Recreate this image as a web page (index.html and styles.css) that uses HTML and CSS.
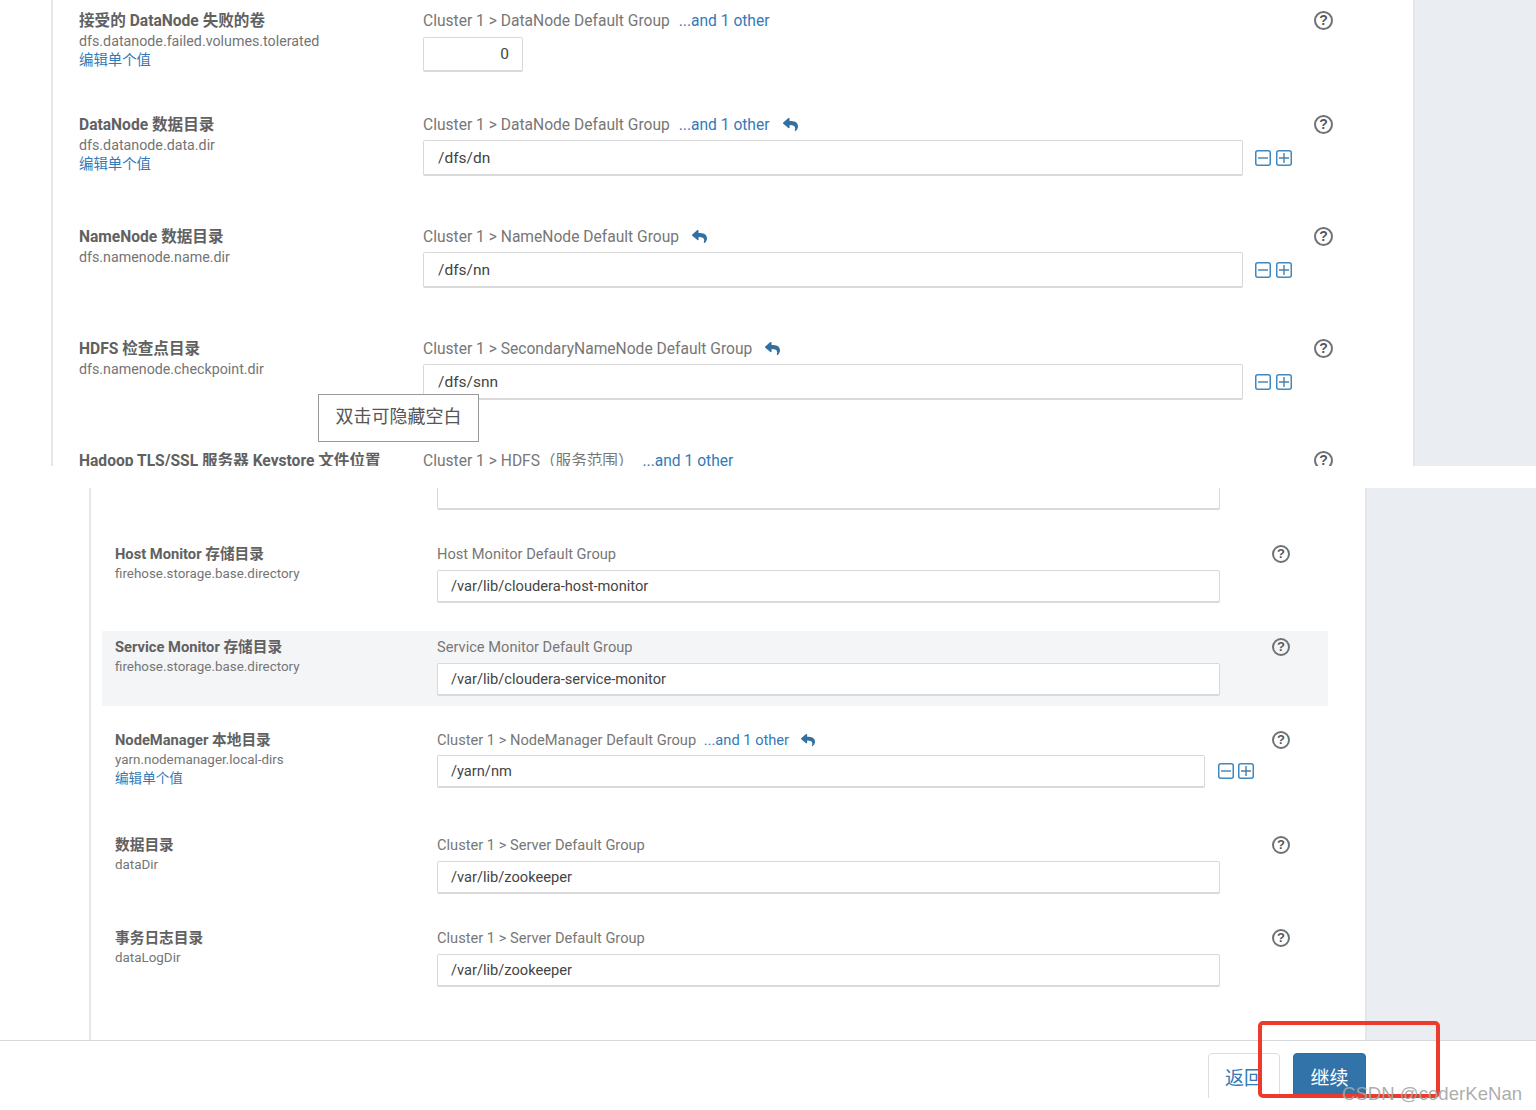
FILE: index.html
```html
<!DOCTYPE html>
<html lang="zh-CN">
<head>
    <meta charset="UTF-8">
    <meta name="viewport" content="width=device-width, initial-scale=1.0">
    <title>HDFS 配置</title>
    <link rel="stylesheet" href="styles.css">
</head>
<body>
    <svg class="defs" width="0" height="0">
        <symbol id="undo" viewBox="0 0 512 512">
            <path fill="#33709f" d="M8.309 189.836L184.313 37.851C199.719 24.546 224 35.347 224 56.015v80.053c160.629 1.839 288 34.032 288 186.258 0 61.441-39.581 122.309-83.333 154.132-13.653 9.931-33.111-2.533-28.077-18.631 45.344-145.012-21.507-183.51-176.59-185.742V360c0 20.7-24.3 31.453-39.687 18.164l-176.004-152c-11.071-9.562-11.086-26.753 0-36.328z"/>
        </symbol>
        <symbol id="minus" viewBox="0 0 16 16">
            <rect x="0.75" y="0.75" width="14.5" height="14.5" rx="2" fill="none" stroke="#3f88c0" stroke-width="1.5"/>
            <path d="M3 8h10" stroke="#4a7ea8" stroke-width="1.4"/>
        </symbol>
        <symbol id="plus" viewBox="0 0 16 16">
            <rect x="0.75" y="0.75" width="14.5" height="14.5" rx="2" fill="none" stroke="#3f88c0" stroke-width="1.5"/>
            <path d="M3 8h10M8 3v10" stroke="#4a7ea8" stroke-width="1.4"/>
        </symbol>
    </svg>

    <!-- 上半部分 -->
    <section class="shot shot-top">
        <div class="panel">
            <div class="row row-first">
                <div class="label">
                    <div class="name">接受的 DataNode 失败的卷</div>
                    <div class="key">dfs.datanode.failed.volumes.tolerated</div>
                    <a class="edit">编辑单个值</a>
                </div>
                <div class="value">
                    <div class="source">Cluster 1 &gt; DataNode Default Group <a class="more">...and 1 other</a></div>
                    <div class="input input-num">0</div>
                </div>
                <div class="tools"></div>
                <span class="help">?</span>
            </div>
            <div class="row">
                <div class="label">
                    <div class="name">DataNode 数据目录</div>
                    <div class="key">dfs.datanode.data.dir</div>
                    <a class="edit">编辑单个值</a>
                </div>
                <div class="value">
                    <div class="source">Cluster 1 &gt; DataNode Default Group <a class="more">...and 1 other</a><svg class="undo"><use href="#undo"/></svg></div>
                    <div class="input">/dfs/dn</div>
                </div>
                <div class="tools"><svg class="tool"><use href="#minus"/></svg><svg class="tool"><use href="#plus"/></svg></div>
                <span class="help">?</span>
            </div>
            <div class="row">
                <div class="label">
                    <div class="name">NameNode 数据目录</div>
                    <div class="key">dfs.namenode.name.dir</div>
                </div>
                <div class="value">
                    <div class="source">Cluster 1 &gt; NameNode Default Group<svg class="undo"><use href="#undo"/></svg></div>
                    <div class="input">/dfs/nn</div>
                </div>
                <div class="tools"><svg class="tool"><use href="#minus"/></svg><svg class="tool"><use href="#plus"/></svg></div>
                <span class="help">?</span>
            </div>
            <div class="row">
                <div class="label">
                    <div class="name">HDFS 检查点目录</div>
                    <div class="key">dfs.namenode.checkpoint.dir</div>
                </div>
                <div class="value">
                    <div class="source">Cluster 1 &gt; SecondaryNameNode Default Group<svg class="undo"><use href="#undo"/></svg></div>
                    <div class="input">/dfs/snn</div>
                </div>
                <div class="tools"><svg class="tool"><use href="#minus"/></svg><svg class="tool"><use href="#plus"/></svg></div>
                <span class="help">?</span>
            </div>
            <div class="row">
                <div class="label">
                    <div class="name">Hadoop TLS/SSL 服务器 Keystore 文件位置</div>
                </div>
                <div class="value">
                    <div class="source">Cluster 1 &gt; HDFS（服务范围） <a class="more">...and 1 other</a></div>
                </div>
                <div class="tools"></div>
                <span class="help">?</span>
            </div>
        </div>
        <div class="side"></div>
    </section>

    <!-- 下半部分 -->
    <section class="shot shot-bottom">
        <div class="panel">
            <div class="row row-cut">
                <div class="label">
                    <div class="key">headlamp_scratch_dir</div>
                </div>
                <div class="value">
                    <div class="input"></div>
                </div>
            </div>
            <div class="row">
                <div class="label">
                    <div class="name">Host Monitor 存储目录</div>
                    <div class="key">firehose.storage.base.directory</div>
                </div>
                <div class="value">
                    <div class="source">Host Monitor Default Group</div>
                    <div class="input">/var/lib/cloudera-host-monitor</div>
                </div>
                <div class="tools"></div>
                <span class="help">?</span>
            </div>
            <div class="row row-hover">
                <div class="label">
                    <div class="name">Service Monitor 存储目录</div>
                    <div class="key">firehose.storage.base.directory</div>
                </div>
                <div class="value">
                    <div class="source">Service Monitor Default Group</div>
                    <div class="input">/var/lib/cloudera-service-monitor</div>
                </div>
                <div class="tools"></div>
                <span class="help">?</span>
            </div>
            <div class="row row-tall">
                <div class="label">
                    <div class="name">NodeManager 本地目录</div>
                    <div class="key">yarn.nodemanager.local-dirs</div>
                    <a class="edit">编辑单个值</a>
                </div>
                <div class="value value-short">
                    <div class="source">Cluster 1 &gt; NodeManager Default Group <a class="more">...and 1 other</a><svg class="undo"><use href="#undo"/></svg></div>
                    <div class="input">/yarn/nm</div>
                </div>
                <div class="tools"><svg class="tool"><use href="#minus"/></svg><svg class="tool"><use href="#plus"/></svg></div>
                <span class="help">?</span>
            </div>
            <div class="row">
                <div class="label">
                    <div class="name">数据目录</div>
                    <div class="key">dataDir</div>
                </div>
                <div class="value">
                    <div class="source">Cluster 1 &gt; Server Default Group</div>
                    <div class="input">/var/lib/zookeeper</div>
                </div>
                <div class="tools"></div>
                <span class="help">?</span>
            </div>
            <div class="row">
                <div class="label">
                    <div class="name">事务日志目录</div>
                    <div class="key">dataLogDir</div>
                </div>
                <div class="value">
                    <div class="source">Cluster 1 &gt; Server Default Group</div>
                    <div class="input">/var/lib/zookeeper</div>
                </div>
                <div class="tools"></div>
                <span class="help">?</span>
            </div>
        </div>
        <div class="side"></div>
    </section>

    <div class="footer">
        <button class="btn">返回</button>
        <button class="btn btn-primary">继续</button>
    </div>

    <!-- 截图上的标注 -->
    <div class="tooltip">双击可隐藏空白</div>
    <div class="redbox"></div>
    <div class="watermark">CSDN @coderKeNan</div>
</body>
</html>
```

FILE: styles.css
```css
* {
    box-sizing: border-box;
}
html, body {
    margin: 0;
    background: #fff;
}
body {
    position: relative;
    width: 1536px;
    height: 1110px;
    overflow: hidden;
    font-family: Roboto, "Noto Sans CJK SC", sans-serif;
    color: #666;
}
.defs {
    position: absolute;
}
a {
    color: #337ab7;
}

/* 两张截图 */
.shot {
    display: flex;
    overflow: hidden;
}
.panel {
    background: #fff;
    border-left: 2px solid #e4e6e9;
    border-right: 2px solid #e4e6e9;
}
.side {
    flex: 1;
    background: #eaedf1;
}
.row {
    display: grid;
}
.name {
    font-weight: 700;
    color: #616161;
    white-space: nowrap;
}
.key {
    color: #757575;
    white-space: nowrap;
}
.edit {
    display: block;
}
.source {
    color: #777;
    white-space: nowrap;
}
.more {
    margin-left: 5px;
}
.undo {
    width: 15px;
    height: 15px;
    margin-left: 13px;
    vertical-align: -2px;
}
.input {
    background: #fff;
    border: 1px solid #d9d9d9;
    border-bottom-width: 2px;
    border-radius: 2px;
    color: #444;
    display: flex;
    align-items: center;
}
.input-num {
    width: 100px;
    justify-content: flex-end;
}
.tools {
    display: flex;
    align-items: center;
}
.help {
    display: block;
    border: 2px solid #6f7276;
    border-radius: 50%;
    color: #55585c;
    font-family: "Liberation Sans", sans-serif;
    font-weight: 700;
    text-align: center;
}

/* 上半部分 */
.shot-top {
    height: 466px;
    margin-left: 51px;
}
.shot-top .panel {
    width: 1364px;
    padding-top: 10px;
}
.shot-top .row {
    height: 112px;
    padding-left: 26px;
    grid-template-columns: 344px 820px 71px 20px;
}
.shot-top .row-first {
    height: 104px;
}
.shot-top .name {
    padding-top: 2px;
    font-size: 15.6px;
    line-height: 18px;
}
.shot-top .key {
    font-size: 14.25px;
    line-height: 22px;
}
.shot-top .edit {
    padding-top: 1px;
    font-size: 14.4px;
    line-height: 16px;
}
.shot-top .source {
    padding-top: 2px;
    font-size: 15.6px;
    line-height: 18px;
}
.shot-top .input {
    height: 36px;
    margin-top: 6px;
    padding: 0 13px 0 14px;
    font-size: 15.5px;
}
.shot-top .input-num {
    margin-top: 7px;
    height: 35px;
}
.shot-top .tools {
    align-self: start;
    height: 36px;
    margin-top: 26px;
    padding-left: 12px;
    gap: 5px;
}
.shot-top .tool {
    width: 16px;
    height: 16px;
}
.shot-top .help {
    width: 19px;
    height: 19px;
    margin-top: 1px;
    font-size: 14px;
    line-height: 15px;
}

/* 下半部分 */
.shot-bottom {
    height: 552px;
    margin-top: 22px;
    margin-left: 89px;
}
.shot-bottom .panel {
    width: 1278px;
    padding-left: 11px;
}
.shot-bottom .row {
    height: 75px;
    margin-bottom: 18px;
    padding: 6px 0 0 13px;
    width: 1226px;
    grid-template-columns: 322px 783px 52px 18px;
}
.shot-bottom .row-cut {
    height: 22px;
    margin-bottom: 28px;
    padding-top: 0;
    overflow: hidden;
}
.shot-bottom .row-cut .label {
    margin-top: -17px;
}
.shot-bottom .row-cut .input {
    height: 60px;
    margin-top: -38px;
}
.shot-bottom .row-hover {
    background: #f4f5f7;
}
.shot-bottom .row-tall {
    height: 87px;
}
.shot-bottom .name {
    font-size: 14.7px;
    line-height: 20px;
}
.shot-bottom .key {
    font-size: 13.4px;
    line-height: 19px;
}
.shot-bottom .edit {
    font-size: 13.6px;
    line-height: 18px;
}
.shot-bottom .source {
    font-size: 14.65px;
    line-height: 20px;
}
.shot-bottom .input {
    height: 33px;
    margin-top: 6px;
    padding: 0 13px;
    font-size: 14.65px;
}
.shot-bottom .value-short .input {
    margin-top: 5px;
    margin-right: 15px;
}
.shot-bottom .more {
    margin-left: 4px;
}
.shot-bottom .undo {
    width: 14px;
    height: 14px;
    margin-left: 12px;
}
.shot-bottom .tools {
    align-self: start;
    height: 31px;
    margin-top: 25px;
    margin-left: -2px;
    gap: 4px;
}
.shot-bottom .tool {
    width: 16px;
    height: 16px;
}
.shot-bottom .help {
    width: 18px;
    height: 18px;
    margin-top: 1px;
    font-size: 13px;
    line-height: 14px;
}

/* 底部按钮 */
.footer {
    display: flex;
    justify-content: flex-end;
    gap: 13px;
    height: 58px;
    padding: 12px 170px 0 0;
    border-top: 1px solid #d5d7da;
    overflow: hidden;
}
.btn {
    width: 72px;
    height: 60px;
    padding: 0 0 14px;
    background: #fff;
    border: 1px solid #ddd;
    border-radius: 4px;
    color: #337ab7;
    font-family: "Noto Sans CJK SC", sans-serif;
    font-size: 19px;
}
.btn-primary {
    width: 73px;
    background: #3274aa;
    border-color: #2e6da4;
    color: #fff;
}

/* 标注 */
.tooltip {
    position: absolute;
    left: 318px;
    top: 394px;
    width: 161px;
    height: 48px;
    background: #fff;
    border: 1px solid #999;
    color: #555;
    font-size: 18px;
    line-height: 44px;
    text-align: center;
}
.redbox {
    position: absolute;
    left: 1258px;
    top: 1021px;
    width: 182px;
    height: 77px;
    border: 4px solid #ec3b2c;
    border-radius: 5px;
}
.watermark {
    position: absolute;
    left: 1342px;
    top: 1082px;
    font-family: "Liberation Sans", sans-serif;
    font-size: 18.6px;
    line-height: 23px;
    color: rgba(165, 165, 165, 0.92);
    white-space: nowrap;
}
```
